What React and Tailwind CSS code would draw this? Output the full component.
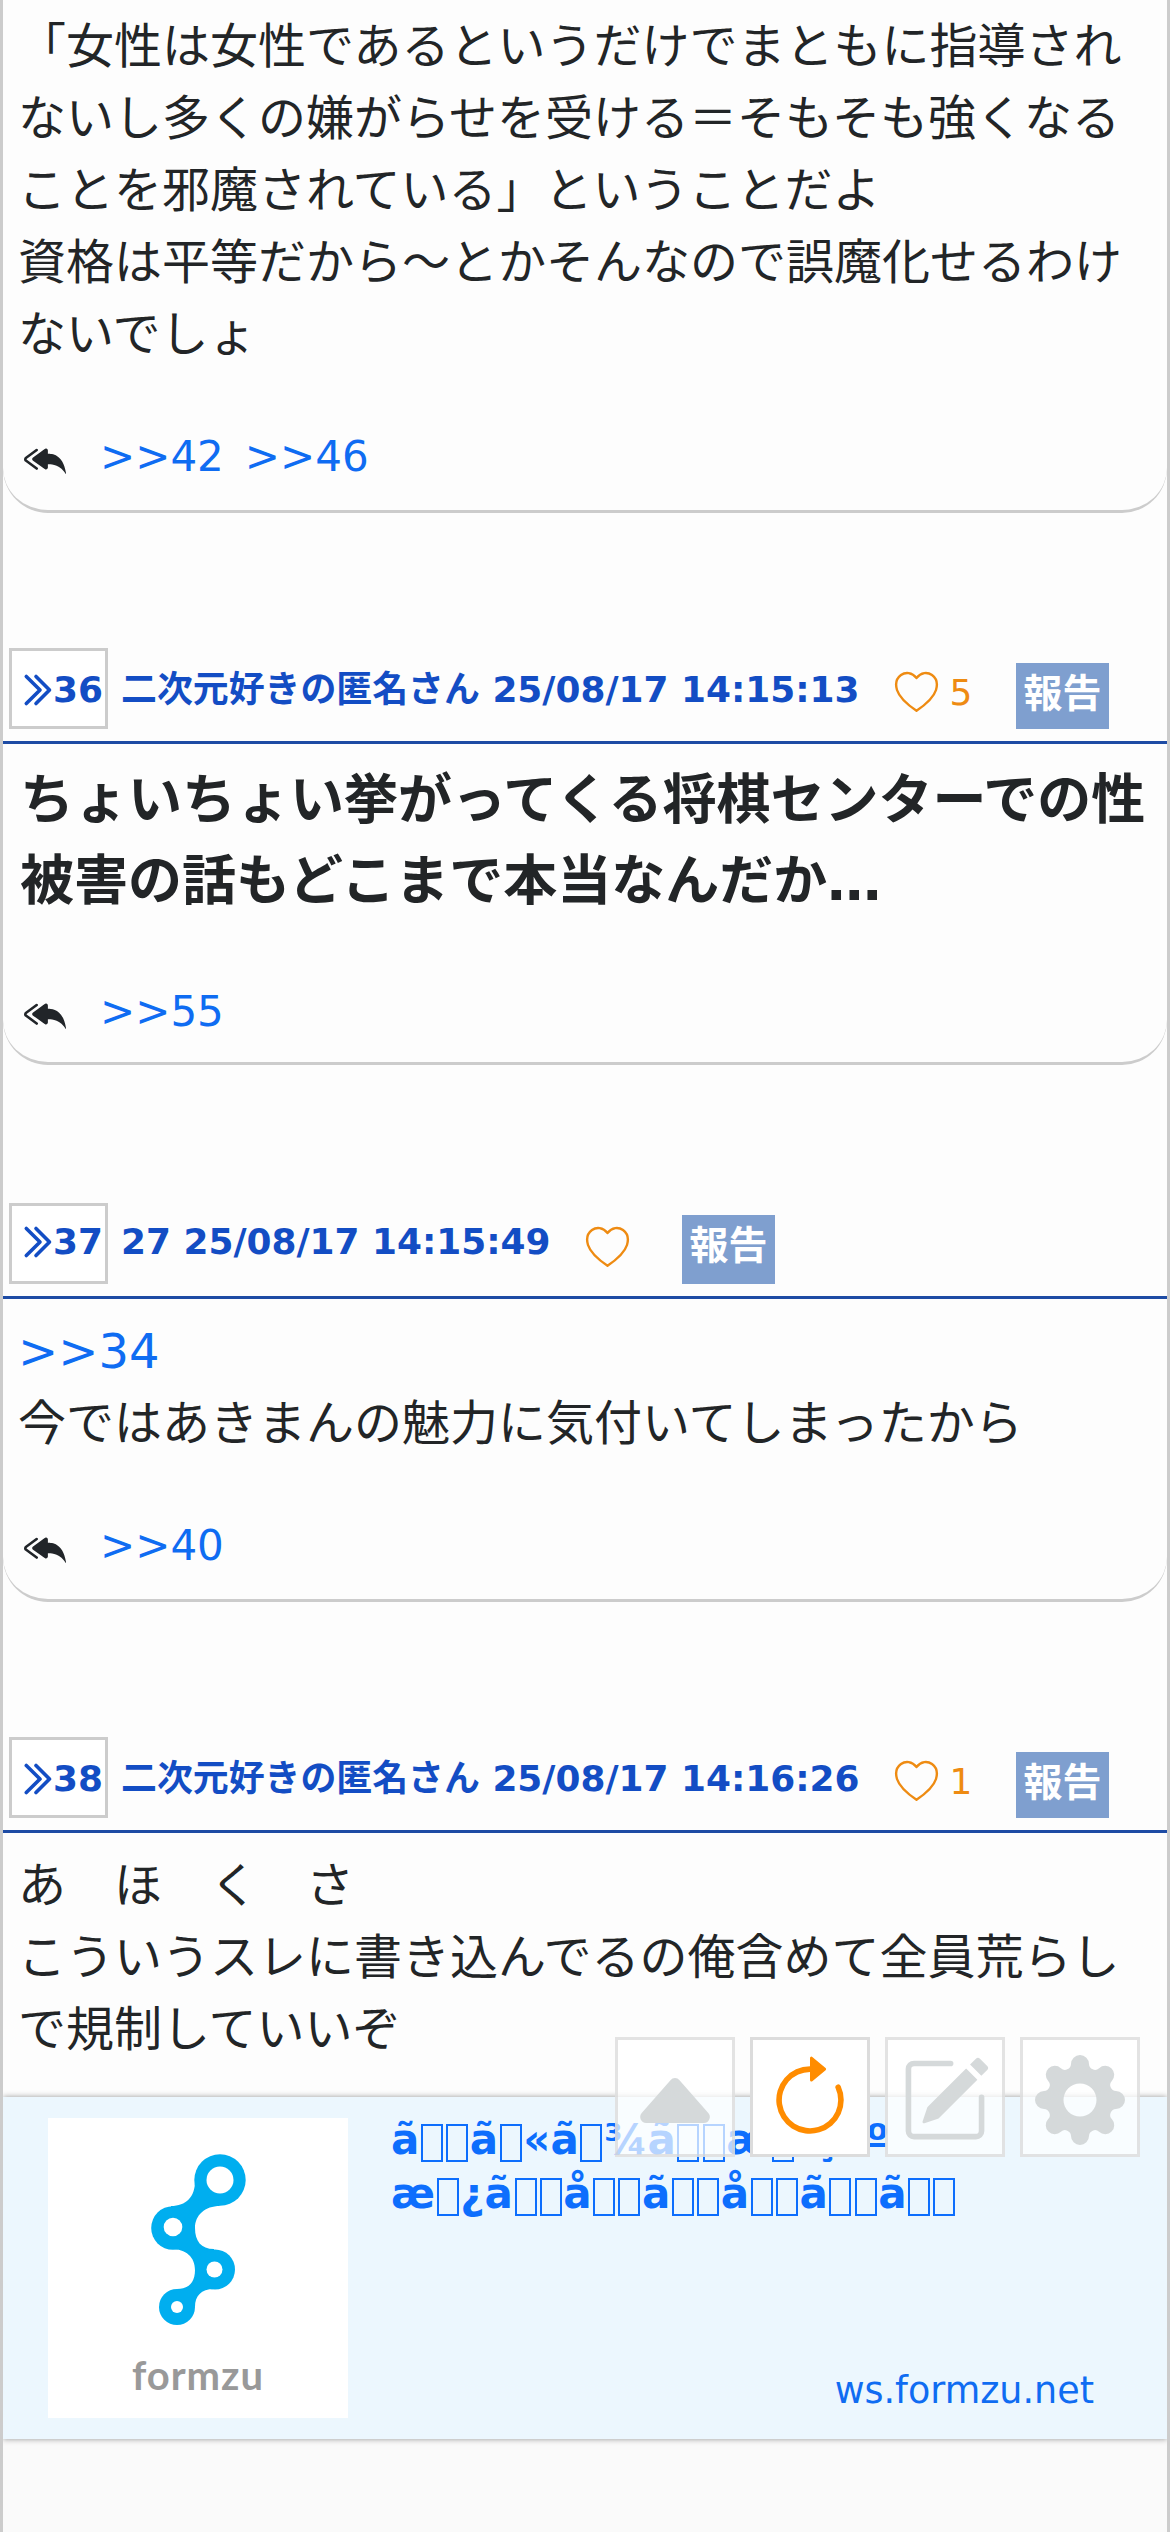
import React from "react";
import { BsReplyAllFill, BsArrowClockwise, BsPencilSquare, BsCaretUpFill } from "react-icons/bs";

const link = "text-[#0f6cf2]";

function Chevrons() {
  return (
    <svg className="h-[36px] w-[30px] shrink-0" viewBox="0 0 30 36" fill="none" stroke="#134dc4" strokeWidth="3.6" strokeLinecap="round" strokeLinejoin="round">
      <path d="M3.300 4.500 L17 18 L3.300 31.500" />
      <path d="M13 4.500 L26.500 18 L13 31.500" />
    </svg>
  );
}

function Heart() {
  return (
    <svg className="h-[42px] w-[45px] shrink-0" viewBox="0 0 45 42" fill="none" stroke="#ee8b12" strokeWidth="2.4" strokeLinejoin="round">
      <path d="M22.500 7 C18 1.200 11.500 0.800 7 4 C2.200 7.500 1.200 13 3 19 C5.500 27 14 34 22.500 39.800 C31 34 39.500 27 42 19 C43.800 13 42.800 7.500 38 4 C33.500 0.800 27 1.200 22.500 7 Z" />
    </svg>
  );
}

// Eight round teeth joined by concave fillets.
function gearPath() {
  const point = (deg) => {
    const a = (deg * Math.PI) / 180;
    return (37.1 * Math.cos(a)).toFixed(2) + " " + (37.1 * Math.sin(a)).toFixed(2);
  };
  let d = "M" + point(-14.04);
  for (let i = 0; i < 8; i++) {
    d += " A9 9 0 0 1 " + point(i * 45 + 14.04);
    d += " A6 6 0 0 0 " + point((i + 1) * 45 - 14.04);
  }
  return d + " Z M16.5 0 A16.5 16.5 0 1 0 -16.5 0 A16.5 16.5 0 1 0 16.5 0 Z";
}

// Title text whose unprintable characters ("_") show as empty boxes.
function BoxedText({ text }) {
  return text.split("").map((c, i) =>
    c === "_" ? (
      <span key={i} className="mx-[1.6px] inline-block h-[38px] w-[22px] border-2 border-current align-[-8px]" />
    ) : (
      <React.Fragment key={i}>{c}</React.Fragment>
    )
  );
}

function Header({ no, name, likes, raised }) {
  return (
    <div className="flex h-[99px] items-start border-b-[3px] border-[#1e4ba4] pl-[6px] pt-[3px] text-[35.9px] font-bold leading-[54px] text-[#134dc4]">
      <div className={"flex h-[81px] w-[99px] shrink-0 items-start border-[3px] border-[#ccc] bg-white pl-[11px] " + (raised ? "pt-[9px]" : "pt-[12px]")}>
        <div className="flex h-[54px] items-center"><Chevrons /></div>
        <span>{no}</span>
      </div>
      <div className={"ml-[13px] whitespace-nowrap " + (raised ? "mt-[12px]" : "mt-[15px]")}>{name}</div>
      <div className="ml-[34px] mt-[15px] flex w-[86px] items-start font-normal text-[#ee8b12]">
        <div className="mt-[8px]"><Heart /></div>
        <span className="ml-[11px] mt-[3px]">{likes}</span>
      </div>
      <div className={"w-[93px] bg-[#7f9fcf] pl-[8px] text-[39px] leading-[61px] text-white " + (raised ? "ml-[11px] mt-[12px] h-[69px]" : "ml-[36px] mt-[15px] h-[66px]")}>
        報告
      </div>
    </div>
  );
}

function Replies({ items }) {
  return (
    <div className="flex h-[63px] items-center pl-[6px] text-[42px]">
      <BsReplyAllFill className="mt-[4px] h-[42px] w-[42px] text-[#212529]" />
      <div className={"ml-[34px] flex gap-[21px] " + link}>
        {items.map((t) => <a key={t}>{t}</a>)}
      </div>
    </div>
  );
}

const cell = "flex h-[120px] w-[120px] items-center justify-center border-[3px] ";
const faded = "border-[#d0d0d0]/60 bg-white/70";

export default function App() {
  return (
    <div className="relative h-[2532px] w-[1170px] overflow-hidden border-x-[3px] border-[#ccc] bg-[#fdfdfd] text-[48px] leading-[72px] text-[#222527] [font-family:'DejaVu_Sans','Noto_Sans_CJK_JP',sans-serif]">
      <div className="h-[513px] rounded-b-[45px] border-b-[3px] border-[#ccc] px-[15px] pt-[10px]">
        <p>「女性は女性であるというだけでまともに指導され<br />ないし多くの嫌がらせを受ける＝そもそも強くなる<br />ことを邪魔されている」ということだよ<br />資格は平等だから～とかそんなので誤魔化せるわけ<br />ないでしょ</p>
        <div className="mt-[55px]"><Replies items={[">>42", ">>46"]} /></div>
      </div>

      <div className="mt-[132px]"><Header no="36" name="二次元好きの匿名さん 25/08/17 14:15:13" likes="5" /></div>
      <div className="h-[321px] rounded-b-[45px] border-b-[3px] border-[#ccc] px-[15px] pt-[16px]">
        <p className="ml-[2px] whitespace-nowrap text-[54px] font-bold leading-[81px]">ちょいちょい挙がってくる将棋センターでの性<br />被害の話もどこまで本当なんだか…</p>
        <div className="mt-[58px]"><Replies items={[">>55"]} /></div>
      </div>

      <div className="mt-[135px]"><Header no="37" name="27 25/08/17 14:15:49" likes="" raised /></div>
      <div className="h-[303px] rounded-b-[45px] border-b-[3px] border-[#ccc] px-[15px] pt-[16px]">
        <p><a className={link}>&gt;&gt;34</a><br />今ではあきまんの魅力に気付いてしまったから</p>
        <div className="mt-[55px]"><Replies items={[">>40"]} /></div>
      </div>

      <div className="mt-[132px]"><Header no="38" name="二次元好きの匿名さん 25/08/17 14:16:26" likes="1" /></div>
      <div className="h-[264px] px-[15px] pt-[16px]">
        <p>あ　ほ　く　さ<br />こういうスレに書き込んでるの俺含めて全員荒らし<br />で規制していいぞ</p>
      </div>

      <div className="relative flex h-[342px] bg-[#ecf7fe] shadow-[0_0_6px_rgba(0,0,0,0.4)]">
        <div className="ml-[45px] mt-[21px] flex h-[300px] w-[300px] shrink-0 flex-col items-center bg-white">
          <svg className="mt-[33px] h-[178px] w-[110px]" viewBox="0 0 110 178">
            <g fill="#00aeef">
              <path d="M52 30 C52 46 43 55 28 55 L28 98 C43 98 52 106 52 119 C52 132 45 138 34 138 L52 156 C52 145 58 138 71 138 L71 98 C58 98 52 90 52 77 C52 64 62 55 77 55 Z" />
              <circle cx="77" cy="29" r="25.7" />
              <circle cx="30" cy="77" r="21.8" />
              <circle cx="72" cy="118.5" r="20" />
              <circle cx="34" cy="156" r="18" />
            </g>
            <g fill="#fff">
              <circle cx="77" cy="29" r="13.5" />
              <circle cx="30" cy="76" r="9.3" />
              <circle cx="71.5" cy="118.5" r="8" />
              <circle cx="34" cy="156" r="6" />
            </g>
          </svg>
          <span className="mt-[16px] text-[40px] font-bold leading-[60px] tracking-[1px] text-[#999] [font-family:Lato,sans-serif]">formzu</span>
        </div>
        <div className="ml-[43px] mt-[16px] flex grow flex-col">
          <p className="whitespace-nowrap text-[42px] font-bold leading-[54px] text-[#0d6efd] [font-family:'DejaVu_Sans',sans-serif]">
            <BoxedText text="ã__ã_«ã_¾ã__æ_²ç¤º" /><br />
            <BoxedText text="æ_¿ã__å__ã__å__ã__ã__" />
          </p>
          <span className={"mr-[73px] mt-[143px] self-end text-[36.5px] leading-[54px] " + link}>ws.formzu.net</span>
        </div>
      </div>
      <div className="h-[93px] bg-[#fafafa]" />

      <div className="absolute left-[612px] top-[2037px] flex gap-[15px] text-[#d5d9da]">
        <div className={cell + faded}><BsCaretUpFill className="mt-[4px] h-[96px] w-[96px]" /></div>
        <div className={cell + "border-[#dcdcdc] bg-white text-[#ff8c00]"}><BsArrowClockwise className="mt-[6px] h-[90px] w-[90px]" /></div>
        <div className={cell + faded}><BsPencilSquare className="mt-[5px] h-[90px] w-[90px]" /></div>
        <div className={cell + faded}>
          <svg className="mt-[6px] h-[90px] w-[90px]" viewBox="-45 -45 90 90" fill="currentColor" fillRule="evenodd"><path d={gearPath()} /></svg>
        </div>
      </div>
    </div>
  );
}
